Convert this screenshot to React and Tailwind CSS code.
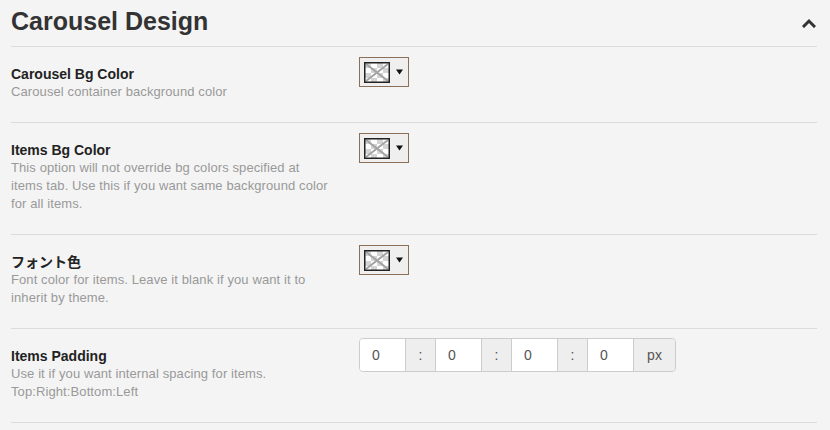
import React from "react";

function Swatch() {
  return (
    <div className="flex h-[30px] w-[50px] items-center border border-[#8c6f57] bg-[#efefef] pl-[4px]">
      <svg width="26" height="21" viewBox="0 0 26 21" className="block">
        <rect x="0" y="0" width="26" height="21" fill="#ffffff" />
        <rect x="1" y="1" width="6" height="5" fill="#d4d4d4" />
        <rect x="13" y="1" width="6" height="5" fill="#d4d4d4" />
        <rect x="7" y="6" width="6" height="5" fill="#d4d4d4" />
        <rect x="19" y="6" width="6" height="5" fill="#d4d4d4" />
        <rect x="1" y="11" width="6" height="5" fill="#d4d4d4" />
        <rect x="13" y="11" width="6" height="5" fill="#d4d4d4" />
        <rect x="7" y="16" width="6" height="4" fill="#d4d4d4" />
        <rect x="19" y="16" width="6" height="4" fill="#d4d4d4" />
        <line x1="2" y1="2" x2="24" y2="19" stroke="#a3a3a3" strokeWidth="2" />
        <line x1="24" y1="2" x2="2" y2="19" stroke="#a3a3a3" strokeWidth="2" />
        <rect x="0.75" y="0.75" width="24.5" height="19.5" fill="none" stroke="#222" strokeWidth="1.5" />
      </svg>
      <svg width="7" height="6" viewBox="0 0 7 6" className="ml-[6px] block">
        <path d="M0 0.5 L7 0.5 L3.5 5.5 Z" fill="#111" />
      </svg>
    </div>
  );
}

function Row({ label, desc, children }) {
  return (
    <div className="flex border-b border-[#dcdcdc] pt-[10px]">
      <div className="w-[348px] pr-[10px] pt-[8px] pb-[21px]">
        <div className="text-[14px] font-bold leading-[18px] text-[#222]">{label}</div>
        <div className="text-[13px] leading-[18px] tracking-[0.1px] text-[#999]">{desc}</div>
      </div>
      <div>{children}</div>
    </div>
  );
}

function PaddingInputs() {
  const box = "flex h-[32px] w-[45px] items-center bg-white pl-[12px] text-[14px] text-[#555]";
  const sep = "flex h-[32px] w-[31px] items-center justify-center border-x border-[#ccc] bg-[#eee] text-[14px] text-[#555]";
  return (
    <div className="-mt-[1px] flex h-[34px] overflow-hidden rounded-[4px] border border-[#ccc]">
      <div className={box}>0</div>
      <div className={sep}>:</div>
      <div className={box}>0</div>
      <div className={sep}>:</div>
      <div className={box}>0</div>
      <div className={sep}>:</div>
      <div className={box}>0</div>
      <div className="flex h-[32px] w-[42px] items-center justify-center border-l border-[#ccc] bg-[#eee] text-[14px] text-[#555]">px</div>
    </div>
  );
}

export default function App() {
  return (
    <div
      className="h-[430px] w-[830px] overflow-hidden bg-[#f4f4f4] pl-[11px] pr-[13px]"
      style={{ fontFamily: '"Liberation Sans", "Noto Sans CJK JP", Arial, sans-serif' }}
    >
      <div className="flex h-[47px] items-start justify-between border-b border-[#dcdcdc] pt-[6px]">
        <h2 className="text-[25px] font-bold leading-[30px] text-[#333]">Carousel Design</h2>
        <svg width="14" height="10" viewBox="0 0 14 10" className="mr-[1px] mt-[12px] block">
          <path d="M2 8 L7 3 L12 8" fill="none" stroke="#333" strokeWidth="3" strokeLinecap="square" />
        </svg>
      </div>
      <Row label="Carousel Bg Color" desc="Carousel container background color">
        <Swatch />
      </Row>
      <Row
        label="Items Bg Color"
        desc={
          <>
            This option will not override bg colors specified at
            <br />
            items tab. Use this if you want same background color
            <br />
            for all items.
          </>
        }
      >
        <Swatch />
      </Row>
      <Row
        label="フォント色"
        desc={
          <>
            Font color for items. Leave it blank if you want it to
            <br />
            inherit by theme.
          </>
        }
      >
        <Swatch />
      </Row>
      <Row
        label="Items Padding"
        desc={
          <>
            Use it if you want internal spacing for items.
            <br />
            Top:Right:Bottom:Left
          </>
        }
      >
        <PaddingInputs />
      </Row>
    </div>
  );
}
